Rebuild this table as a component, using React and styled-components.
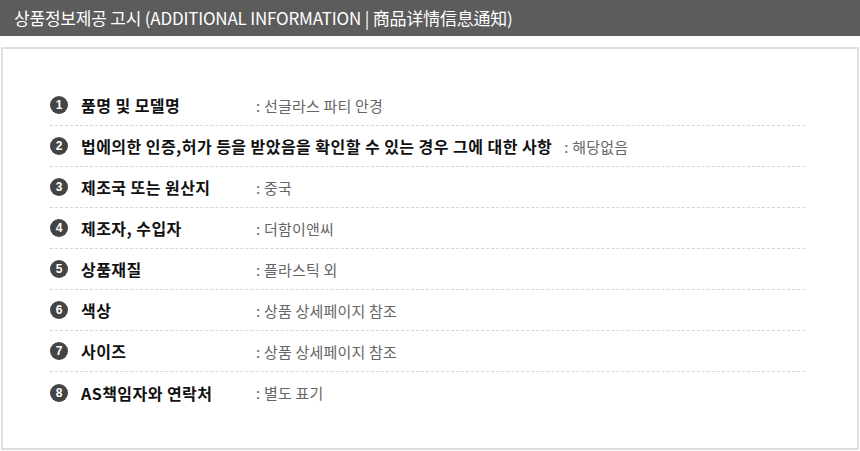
import React from "react";
import styled, { createGlobalStyle } from "styled-components";

const items = [
  { label: "품명 및 모델명", value: "선글라스 파티 안경" },
  { label: "법에의한 인증,허가 등을 받았음을 확인할 수 있는 경우 그에 대한 사항", value: "해당없음" },
  { label: "제조국 또는 원산지", value: "중국" },
  { label: "제조자, 수입자", value: "더함이앤씨" },
  { label: "상품재질", value: "플라스틱 외" },
  { label: "색상", value: "상품 상세페이지 참조" },
  { label: "사이즈", value: "상품 상세페이지 참조" },
  { label: "AS책임자와 연락처", value: "별도 표기" },
];

export default function App() {
  return (
    <>
      <GlobalStyle />
      <Header>상품정보제공 고시 (ADDITIONAL INFORMATION | 商品详情信息通知)</Header>
      <Box>
        <List>
          {items.map((item, i) => (
            <Row key={i}>
              <Badge>{i + 1}</Badge>
              <Label>{item.label}</Label>
              <Value>: {item.value}</Value>
            </Row>
          ))}
        </List>
      </Box>
    </>
  );
}

const GlobalStyle = createGlobalStyle`
  *, *::before, *::after {
    box-sizing: border-box;
  }
  body {
    margin: 0;
    background: #fff;
    font-family: "Noto Sans CJK KR", "Noto Sans", sans-serif;
  }
`;

const Header = styled.div`
  height: 36px;
  background: #5c5c5c;
  color: #fff;
  font-size: 17px;
  line-height: 36px;
  padding-left: 14px;
  letter-spacing: -0.2px;
`;

const Box = styled.div`
  margin: 11px 1px 0;
  height: 403px;
  border: 2px solid #dedede;
  padding: 36px 52px 0 47px;
`;

const List = styled.ul`
  list-style: none;
  margin: 0;
  padding: 0;
`;

const Row = styled.li`
  display: flex;
  align-items: center;
  height: 41px;
  border-bottom: 1px dashed #d6d6d6;
  &:last-child {
    border-bottom: none;
  }
`;

const Badge = styled.span`
  width: 18px;
  height: 18px;
  border-radius: 50%;
  background: #444;
  color: #fff;
  font-family: "Liberation Sans", sans-serif;
  font-weight: bold;
  font-size: 12px;
  display: flex;
  align-items: center;
  justify-content: center;
  margin-right: 13px;
  flex-shrink: 0;
`;

const Label = styled.span`
  min-width: 163px;
  font-size: 16px;
  font-weight: bold;
  color: #111;
  letter-spacing: 0.45px;
  white-space: nowrap;
  margin-right: 12px;
  flex-shrink: 0;
`;

const Value = styled.span`
  font-size: 15px;
  color: #666;
  white-space: nowrap;
  letter-spacing: 0.2px;
`;
